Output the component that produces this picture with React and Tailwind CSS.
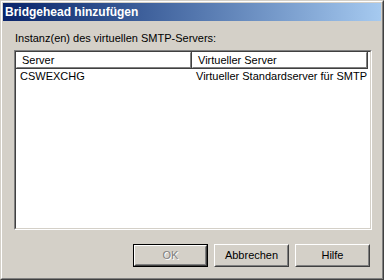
import React from 'react';

// Win2000-style "add bridgehead" dialog
const Button = ({ children, isDefault, disabled }) => {
  const face = (
    <div className="flex-1 border border-t-white border-l-white border-b-[#404040] border-r-[#404040]">
      <div className="h-full flex items-center justify-center border border-t-[#d4d0c8] border-l-[#d4d0c8] border-b-[#808080] border-r-[#808080]">
        <span
          className={
            disabled
              ? 'text-[#808080] [text-shadow:1px_1px_0_#ffffff]'
              : 'text-black'
          }
        >
          {children}
        </span>
      </div>
    </div>
  );
  return (
    <div className={`w-[75px] h-[23px] flex ${isDefault ? 'border border-black' : ''}`}>
      {face}
    </div>
  );
};

const HeaderCell = ({ children, width }) => (
  <div
    className="h-[17px] flex shrink-0 border-r border-b border-[#404040] border-t-0 border-l-0"
    style={{ width }}
  >
    <div className="flex-1 flex items-center pl-[5px] border-t border-l border-t-white border-l-white border-r border-b border-r-[#808080] border-b-[#808080]">
      {children}
    </div>
  </div>
);

export default function App() {
  return (
    <div
      className="w-[384px] h-[280px] bg-[#d4d0c8] text-[11px] leading-none text-black flex flex-col"
      style={{ fontFamily: '"Liberation Sans", Arial, sans-serif' }}
    >
      {/* window frame */}
      <div className="flex-1 flex flex-col border border-t-[#d4d0c8] border-l-[#d4d0c8] border-b-[#404040] border-r-[#404040]">
        <div className="flex-1 flex flex-col p-px border border-t-white border-l-white border-b-[#808080] border-r-[#808080]">
          {/* title bar */}
          <div className="h-[18px] flex items-center pl-[2px] bg-gradient-to-r from-[#0a246a] to-[#a6caf0]">
            <span className="text-white font-bold text-[12px]">Bridgehead hinzufügen</span>
          </div>

          {/* body */}
          <div className="flex-1 flex flex-col px-[11px] pt-[12px]">
            <div className="h-[13px] pl-px">Instanz(en) des virtuellen SMTP-Servers:</div>

            {/* list view */}
            <div className="mt-[4px] w-[358px] h-[180px] flex border border-t-[#808080] border-l-[#808080] border-b-white border-r-white">
              <div className="flex-1 flex flex-col bg-white border border-t-[#404040] border-l-[#404040] border-b-[#d4d0c8] border-r-[#d4d0c8]">
                <div className="flex">
                  <HeaderCell width={176}>Server</HeaderCell>
                  <HeaderCell width={176}>Virtueller Server</HeaderCell>
                </div>
                <div className="flex h-[14px] items-center">
                  <div className="w-[176px] pl-[4px]">CSWEXCHG</div>
                  <div className="pl-[4px]">Virtueller Standardserver für SMTP</div>
                </div>
              </div>
            </div>

            {/* buttons */}
            <div className="mt-[14px] flex justify-end gap-[6px]">
              <Button isDefault disabled>OK</Button>
              <Button>Abbrechen</Button>
              <Button>Hilfe</Button>
            </div>
          </div>
        </div>
      </div>
    </div>
  );
}
